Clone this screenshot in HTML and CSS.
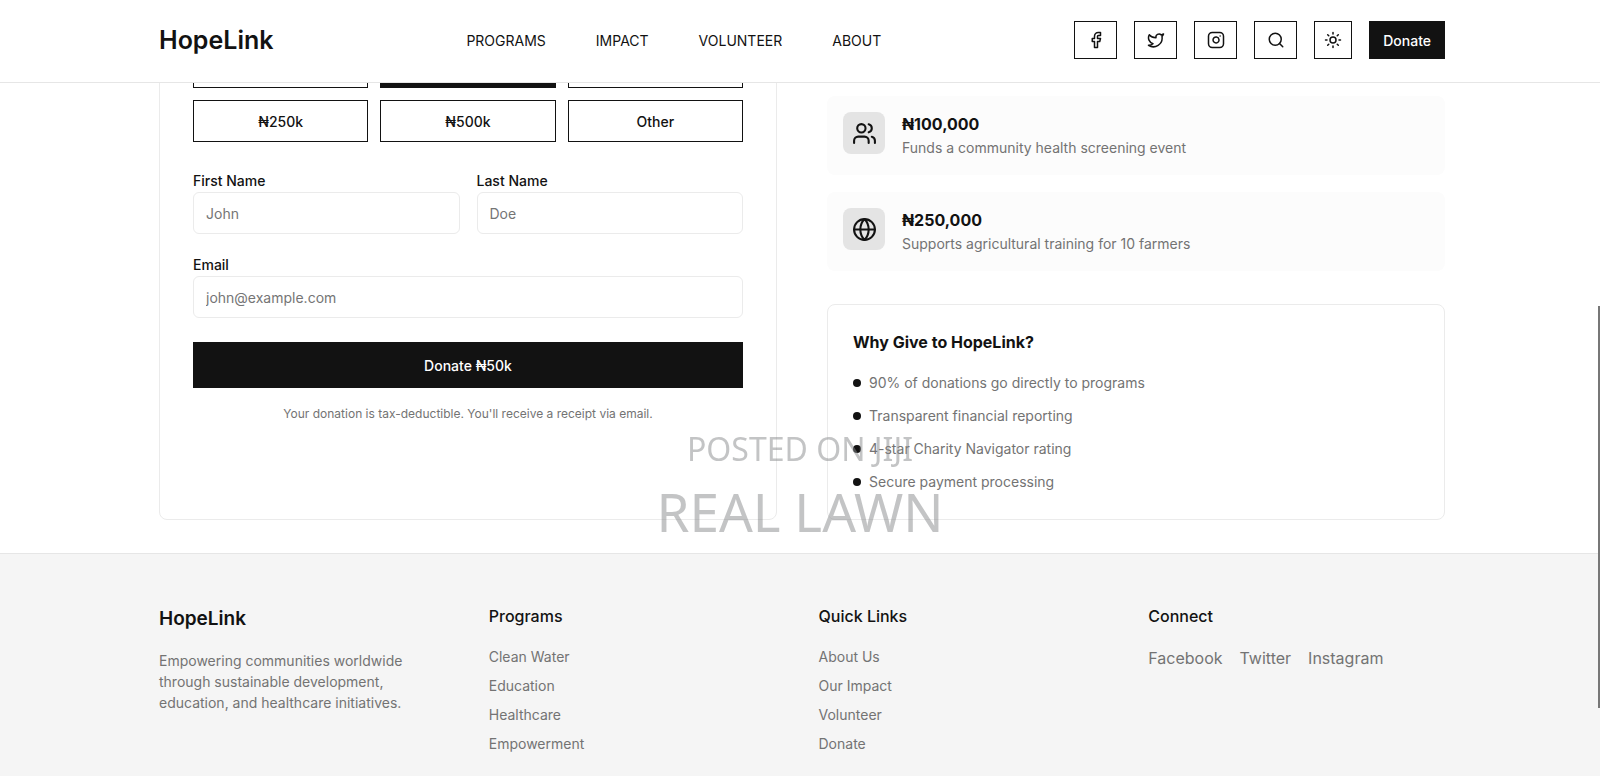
FILE: index.html
```html
<!DOCTYPE html>
<html lang="en">
<head>
    <meta charset="UTF-8">
    <meta name="viewport" content="width=device-width, initial-scale=1.0">
    <title>HopeLink</title>
    <link rel="stylesheet" href="styles.css">
</head>
<body>
    <!-- Header -->
    <header class="header">
        <div class="container header-inner">
            <a href="#" class="logo">HopeLink</a>
            <nav class="nav">
                <a href="#">PROGRAMS</a>
                <a href="#">IMPACT</a>
                <a href="#">VOLUNTEER</a>
                <a href="#">ABOUT</a>
            </nav>
            <div class="actions">
                <button type="button" class="icon-btn" aria-label="Facebook">
                    <svg viewBox="0 0 24 24"><path d="M18 2h-3a5 5 0 0 0-5 5v3H7v4h3v8h4v-8h3l1-4h-4V7a1 1 0 0 1 1-1h3z"/></svg>
                </button>
                <button type="button" class="icon-btn" aria-label="Twitter">
                    <svg viewBox="0 0 24 24"><path d="M22 4s-.7 2.1-2 3.4c1.6 10-9.4 17.3-18 11.6 2.2.1 4.4-.6 6-2C3 15.5.5 9.6 3 5c2.2 2.6 5.6 4.1 9 4-.9-4.2 4-6.6 7-3.8 1.1 0 3-1.2 3-1.2z"/></svg>
                </button>
                <button type="button" class="icon-btn" aria-label="Instagram">
                    <svg viewBox="0 0 24 24"><rect x="2" y="2" width="20" height="20" rx="5"/><path d="M16 11.37A4 4 0 1 1 12.63 8 4 4 0 0 1 16 11.37z"/><path d="M17.5 6.5h.01"/></svg>
                </button>
                <button type="button" class="icon-btn" aria-label="Search">
                    <svg viewBox="0 0 24 24"><circle cx="11" cy="11" r="8"/><path d="m21 21-4.3-4.3"/></svg>
                </button>
                <button type="button" class="icon-btn theme-btn" aria-label="Toggle theme">
                    <svg viewBox="0 0 24 24"><circle cx="12" cy="12" r="4"/><path d="M12 2v2M12 20v2M4.93 4.93l1.41 1.41M17.66 17.66l1.41 1.41M2 12h2M20 12h2M6.34 17.66l-1.41 1.41M19.07 4.93l-1.41 1.41"/></svg>
                </button>
                <button type="button" class="btn-dark donate-btn">Donate</button>
            </div>
        </div>
    </header>

    <!-- Donation Section -->
    <main class="container donate">
        <form class="card donate-form">
            <div class="amounts">
                <button type="button" class="amount">₦25k</button>
                <button type="button" class="amount active">₦50k</button>
                <button type="button" class="amount">₦100k</button>
                <button type="button" class="amount">₦250k</button>
                <button type="button" class="amount">₦500k</button>
                <button type="button" class="amount">Other</button>
            </div>
            <div class="names">
                <div class="field">
                    <label for="firstName">First Name</label>
                    <input type="text" id="firstName" placeholder="John">
                </div>
                <div class="field">
                    <label for="lastName">Last Name</label>
                    <input type="text" id="lastName" placeholder="Doe">
                </div>
            </div>
            <div class="field">
                <label for="email">Email</label>
                <input type="email" id="email" placeholder="john@example.com">
            </div>
            <button type="submit" class="btn-dark submit-btn">Donate ₦50k</button>
            <p class="note">Your donation is tax-deductible. You'll receive a receipt via email.</p>
        </form>

        <div class="impact">
            <div class="impact-card">
                <div class="impact-icon">
                    <svg viewBox="0 0 24 24"><path d="M16 21v-2a4 4 0 0 0-4-4H6a4 4 0 0 0-4 4v2"/><circle cx="9" cy="7" r="4"/><path d="M22 21v-2a4 4 0 0 0-3-3.87"/><path d="M16 3.13a4 4 0 0 1 0 7.75"/></svg>
                </div>
                <div>
                    <h3>₦100,000</h3>
                    <p>Funds a community health screening event</p>
                </div>
            </div>
            <div class="impact-card">
                <div class="impact-icon">
                    <svg viewBox="0 0 24 24"><circle cx="12" cy="12" r="10"/><path d="M12 2a14.5 14.5 0 0 0 0 20 14.5 14.5 0 0 0 0-20"/><path d="M2 12h20"/></svg>
                </div>
                <div>
                    <h3>₦250,000</h3>
                    <p>Supports agricultural training for 10 farmers</p>
                </div>
            </div>
            <div class="card why">
                <h3>Why Give to HopeLink?</h3>
                <ul>
                    <li>90% of donations go directly to programs</li>
                    <li>Transparent financial reporting</li>
                    <li>4-star Charity Navigator rating</li>
                    <li>Secure payment processing</li>
                </ul>
            </div>
        </div>
    </main>

    <!-- Footer -->
    <footer class="footer">
        <div class="container footer-grid">
            <div>
                <h2>HopeLink</h2>
                <p>Empowering communities worldwide through sustainable development, education, and healthcare initiatives.</p>
            </div>
            <div>
                <h3>Programs</h3>
                <ul>
                    <li><a href="#">Clean Water</a></li>
                    <li><a href="#">Education</a></li>
                    <li><a href="#">Healthcare</a></li>
                    <li><a href="#">Empowerment</a></li>
                </ul>
            </div>
            <div>
                <h3>Quick Links</h3>
                <ul>
                    <li><a href="#">About Us</a></li>
                    <li><a href="#">Our Impact</a></li>
                    <li><a href="#">Volunteer</a></li>
                    <li><a href="#">Donate</a></li>
                </ul>
            </div>
            <div>
                <h3>Connect</h3>
                <div class="social">
                    <a href="#">Facebook</a>
                    <a href="#">Twitter</a>
                    <a href="#">Instagram</a>
                </div>
            </div>
        </div>
    </footer>

    <!-- Watermark -->
    <div class="watermark">
        <span class="wm-small">POSTED ON JIJI</span>
        <span class="wm-large">REAL LAWN</span>
    </div>
    <div class="scroll-thumb"></div>
</body>
</html>
```
FILE: styles.css
```css
* {
    margin: 0;
    padding: 0;
    box-sizing: border-box;
}

body {
    font-family: "Inter", "Liberation Sans", sans-serif;
    font-size: 14px;
    line-height: 21px;
    color: #121212;
    background: #fff;
    overflow: hidden;
    height: 100vh;
}
a {
    color: inherit;
    text-decoration: none;
}
ul {
    list-style: none;
}
button,
input {
    font: inherit;
    color: inherit;
}
button {
    cursor: pointer;
}
svg {
    fill: none;
    stroke: currentColor;
    stroke-width: 2;
    stroke-linecap: round;
    stroke-linejoin: round;
}
.container {
    width: 100%;
    max-width: 1290px;
    margin: 0 auto;
    padding-left: 4px;
}

/* Header */
.header {
    position: fixed;
    top: 0;
    left: 0;
    right: 0;
    z-index: 10;
    background: #fff;
    border-bottom: 1px solid #e6e6e6;
}
.header-inner {
    display: flex;
    align-items: center;
    justify-content: space-between;
    height: 82px;
    padding-bottom: 2px;
}
.logo {
    font-size: 25px;
    font-weight: 600;
}
.nav {
    display: flex;
    gap: 50px;
}
.actions {
    display: flex;
    gap: 17px;
}
.icon-btn {
    display: flex;
    align-items: center;
    justify-content: center;
    width: 43px;
    height: 38px;
    background: #fff;
    border: 1px solid #121212;
}
.icon-btn svg {
    width: 18px;
    height: 18px;
}
.theme-btn {
    width: 38px;
}
.btn-dark {
    background: #121212;
    color: #fff;
    border: none;
    font-weight: 500;
}
.donate-btn {
    padding: 0 14px;
}

/* Donation Section */
.donate {
    display: grid;
    grid-template-columns: 1fr 1fr;
    gap: 50px;
    padding-top: 12px;
    padding-bottom: 33px;
}
.card {
    border: 1px solid #ebebeb;
    border-radius: 8px;
}
.donate-form {
    padding: 33px;
}
.amounts {
    display: grid;
    grid-template-columns: repeat(3, 1fr);
    gap: 12px;
    margin-bottom: 29px;
}
.amount {
    height: 42px;
    background: #fff;
    border: 1px solid #121212;
    font-weight: 500;
}
.amount.active {
    background: #121212;
    color: #fff;
}
.names {
    display: grid;
    grid-template-columns: 1fr 1fr;
    gap: 17px;
    margin-bottom: 21px;
}
.field label {
    display: block;
    padding-bottom: 2px;
    line-height: 19px;
    font-weight: 500;
}
.field input {
    display: block;
    width: 100%;
    height: 42px;
    padding: 0 12px;
    background: #fff;
    border: 1px solid #ebebeb;
    border-radius: 6px;
}
.field input::placeholder {
    color: #757575;
}
.submit-btn {
    width: 100%;
    height: 46px;
    margin-top: 24px;
}
.note {
    margin-top: 17px;
    font-size: 12px;
    line-height: 18px;
    text-align: center;
    color: #737373;
}

/* Impact */
.impact {
    padding-top: 84px;
}
.impact-card {
    display: flex;
    gap: 17px;
    margin-bottom: 17px;
    padding: 16px;
    background: #fcfcfc;
    border-radius: 8px;
}
.impact-icon {
    display: flex;
    align-items: center;
    justify-content: center;
    width: 42px;
    height: 42px;
    background: #e4e4e4;
    border-radius: 8px;
}
.impact-icon svg {
    width: 25px;
    height: 25px;
}
.impact-card h3,
.why h3 {
    font-size: 16px;
    line-height: 25px;
    font-weight: 700;
}
.impact-card p {
    line-height: 22px;
    color: #737373;
}
.why {
    margin-top: 33px;
    padding: 25px 25px 27px;
}
.why ul {
    display: grid;
    gap: 12px;
    margin-top: 17px;
    color: #737373;
}
.why li {
    display: flex;
    align-items: center;
    gap: 8px;
}
.why li::before {
    content: "";
    width: 8px;
    height: 8px;
    border-radius: 50%;
    background: #121212;
}

/* Footer */
.footer {
    background: #f5f5f5;
    border-top: 1px solid #e6e6e6;
    padding: 50px 0;
}
.footer-grid {
    display: grid;
    grid-template-columns: repeat(4, 1fr);
    gap: 33px;
    color: #737373;
}
.footer h2,
.footer h3 {
    margin-bottom: 17px;
    color: #121212;
}
.footer h2 {
    font-size: 19px;
    line-height: 29px;
    font-weight: 600;
}
.footer h3 {
    font-size: 16px;
    line-height: 25px;
    font-weight: 500;
}
.footer p {
    max-width: 270px;
}
.footer ul {
    display: grid;
    gap: 8px;
}
.social {
    display: flex;
    gap: 17px;
    font-size: 16px;
    line-height: 25px;
}

/* Watermark */
.watermark {
    position: fixed;
    left: 0;
    right: 0;
    bottom: 227px;
    z-index: 20;
    display: flex;
    flex-direction: column;
    align-items: center;
    gap: 4px;
    font-family: "Noto Sans", sans-serif;
    color: rgba(135, 138, 140, 0.5);
    pointer-events: none;
}
.wm-small {
    font-size: 32px;
    line-height: 44px;
}
.wm-large {
    font-size: 53px;
    line-height: 74px;
}
.scroll-thumb {
    position: fixed;
    right: 0;
    top: 306px;
    width: 2px;
    height: 402px;
    background: #777;
}
```
